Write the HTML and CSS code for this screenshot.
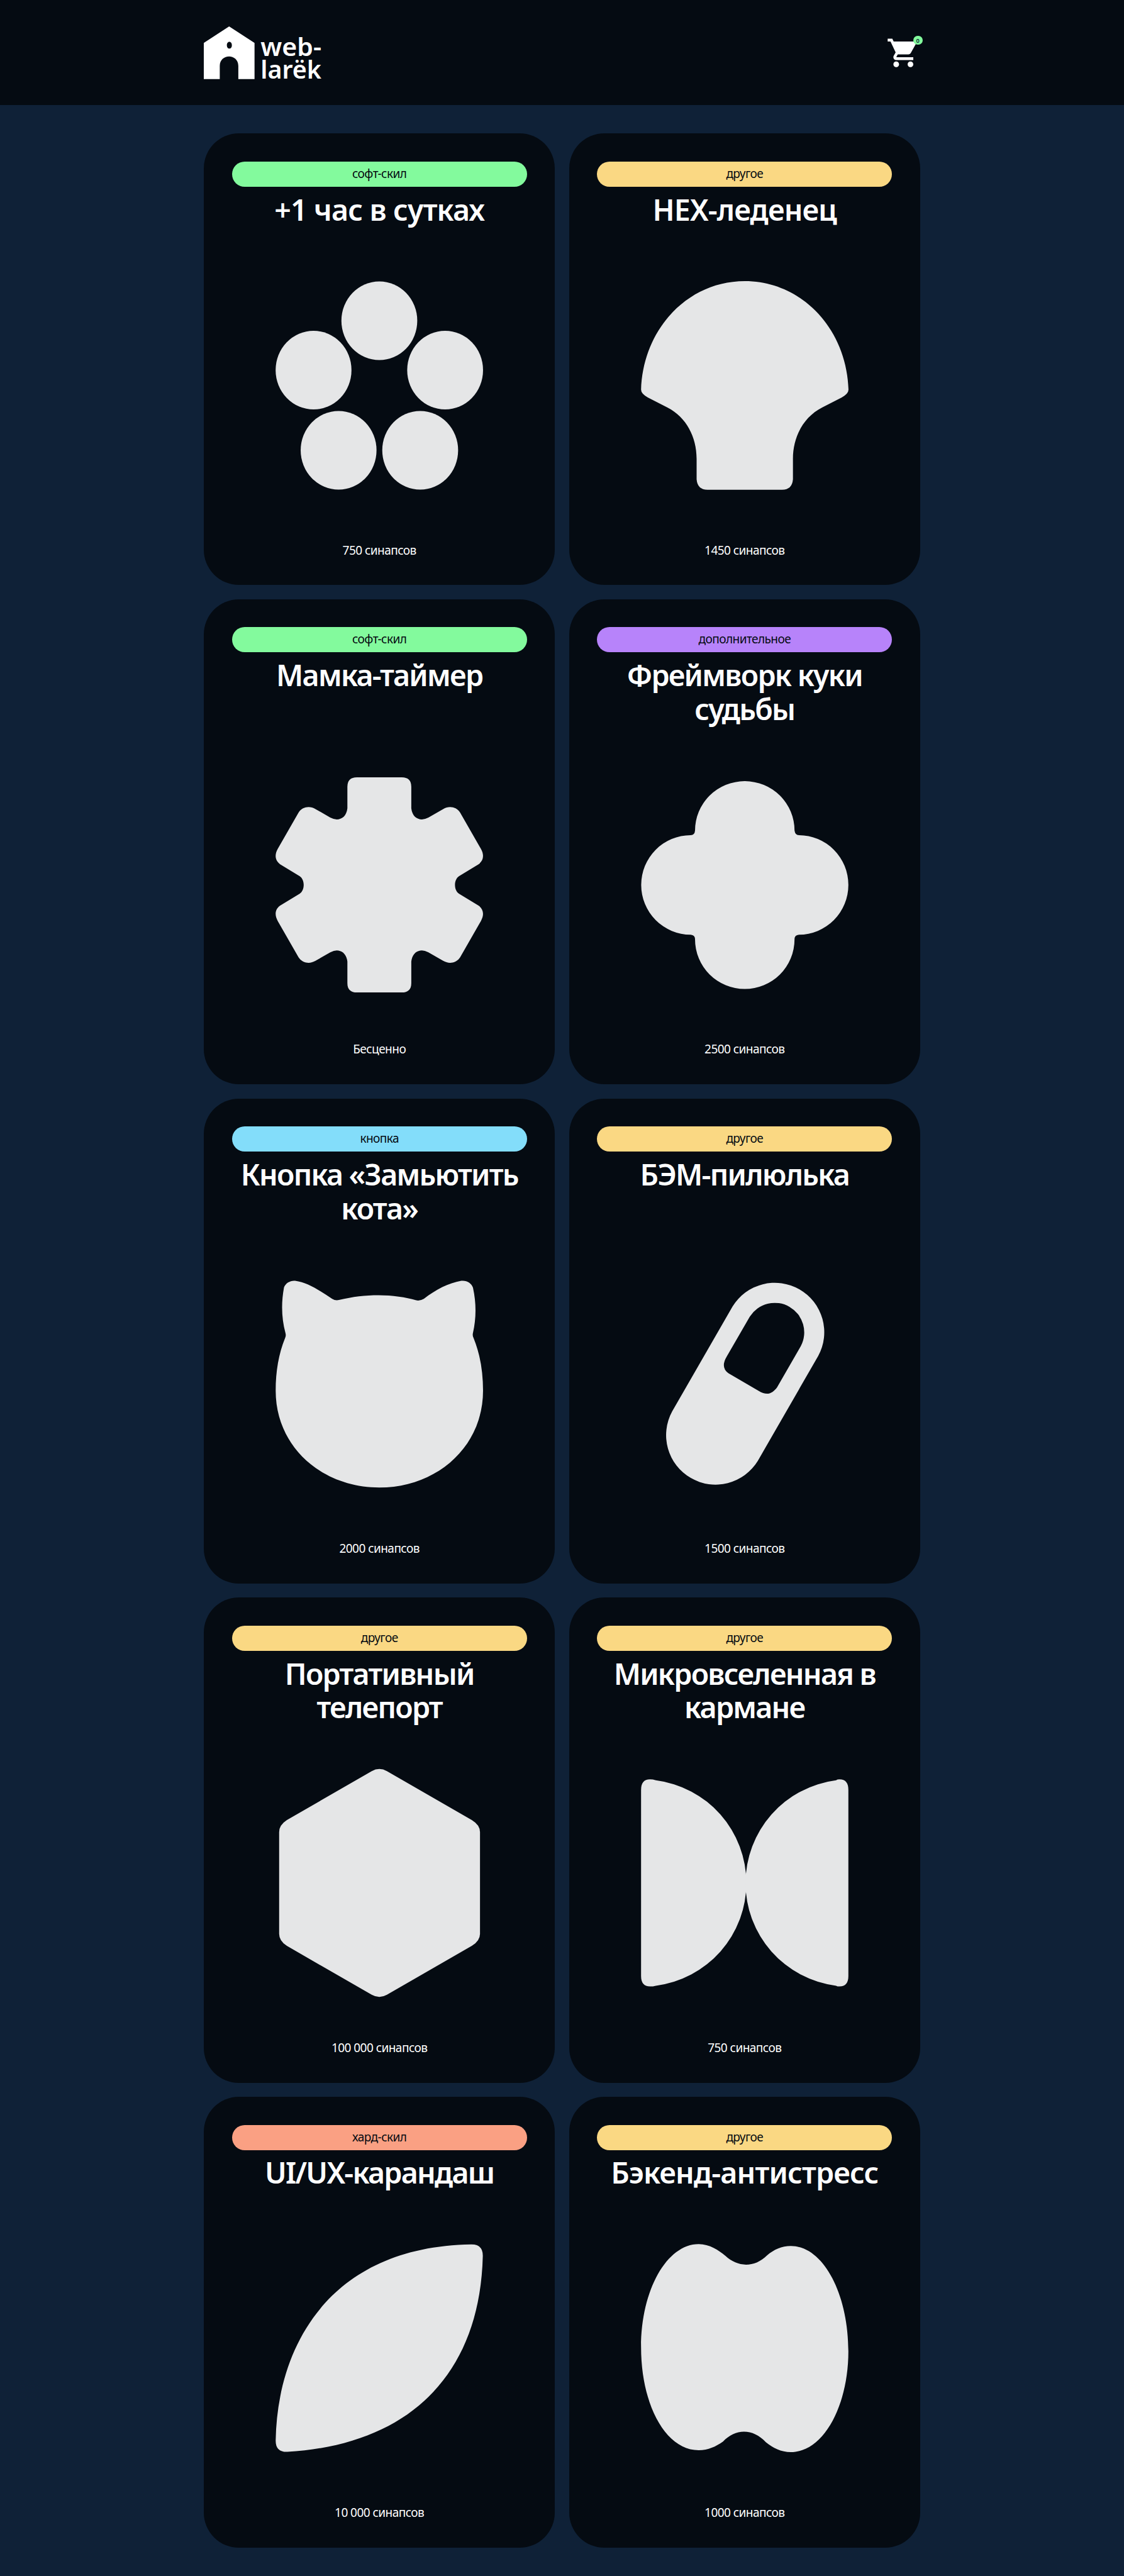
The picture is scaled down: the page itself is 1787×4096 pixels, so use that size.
FILE: index.html
```html
<!DOCTYPE html>
<html lang="ru">
<head>
<meta charset="UTF-8">
<title>web-larëk</title>
<link rel="stylesheet" href="styles.css">
</head>
<body>
<header class="header">
  <div class="header__container">
    <a class="header__logo" aria-label="web-larëk">
      <svg class="logo" viewBox="0 0 204 90">
        <path fill-rule="evenodd" d="M43.3 0L86.7 28.3V90H59V67.5C59 45.8 27.3 45.8 27.3 67.5V90H0V28.3ZM43.7 26.3C41 26.3 39.4 28.8 39.4 32.3S41 38 43.7 38S48 35.8 48 32.3S46.4 26.3 43.7 26.3Z"/>
        <text x="97" y="51" textLength="104" lengthAdjust="spacingAndGlyphs">web-</text>
        <text x="97" y="89.5" textLength="104" lengthAdjust="spacingAndGlyphs">larëk</text>
      </svg>
    </a>
    <button class="header__basket" type="button">
      <svg class="header__basket-icon" viewBox="0 0 24 24"><path d="M7 18c-1.1 0-1.99.9-1.99 2S5.9 22 7 22s2-.9 2-2-.9-2-2-2zM1 2v2h2l3.6 7.59-1.35 2.45c-.16.28-.25.61-.25.96 0 1.1.9 2 2 2h12v-2H7.42c-.14 0-.25-.11-.25-.25l.03-.12.9-1.63h7.45c.75 0 1.41-.41 1.75-1.03l3.58-6.49c.08-.14.12-.31.12-.48 0-.55-.45-1-1-1H5.21l-.94-2H1zm16 16c-1.1 0-1.99.9-1.99 2s.89 2 1.99 2 2-.9 2-2-.9-2-2-2z"/></svg>
      <span class="header__basket-counter">0</span>
    </button>
  </div>
</header>
<main class="gallery">
  <button class="card">
    <span class="card__category card__category_soft">софт-скил</span>
    <h2 class="card__title card__title_wide"><span class="card__line">+1 час в сутках</span></h2>
    <svg class="card__image" viewBox="0 0 400 400"><ellipse cx="200" cy="89.2" rx="64.8" ry="67.2"/><ellipse cx="87.6" cy="173.6" rx="64.8" ry="67.2"/><ellipse cx="312.4" cy="173.6" rx="64.8" ry="67.2"/><ellipse cx="130.4" cy="310.6" rx="64.8" ry="67.2"/><ellipse cx="269.8" cy="310.6" rx="64.8" ry="67.2"/></svg>
    <span class="card__price">750 синапсов</span>
  </button>
  <button class="card">
    <span class="card__category card__category_other">другое</span>
    <h2 class="card__title card__title_wide"><span class="card__line">HEX-леденец</span></h2>
    <svg class="card__image" viewBox="0 0 400 400"><path d="M22.8 207C26 104 102 21.5 200 21.5S374 104 377.2 207Q377.2 214 365.7 220.4L332.1 237.6C300 254 282.3 288 282.3 325V360Q281 378 263.7 378H136.3Q119 378 117.7 360V325C117.7 288 100 254 67.9 237.6L34.3 220.4Q22.8 214 22.8 207Z"/></svg>
    <span class="card__price">1450 синапсов</span>
  </button>
  <button class="card">
    <span class="card__category card__category_soft">софт-скил</span>
    <h2 class="card__title"><span class="card__line">Мамка-таймер</span></h2>
    <svg class="card__image" viewBox="0 0 400 400"><path d="M161.7 16.2H238.3Q254.6 16.2 254.6 32.3V69C256 82 264 88 272.7 88Q277.5 88 283.8 84.8L309.1 70.3C319 64.5 331 66 338 76.2L373.6 138.4C379.5 149 378 158.5 369.6 164.6L336 185C327 191 327 209 336 215L369.6 235.4C378 241.5 379.5 251 373.6 261.6L338 323.8C331 334 319 335.5 309.1 329.7L283.8 315.2Q277.5 312 272.7 312C264 312 256 318 254.6 331V367.7Q254.6 383.8 238.3 383.8H161.7Q145.4 383.8 145.4 367.7V331C144 318 136 312 127.3 312Q122.5 312 116.2 315.2L90.9 329.7C81 335.5 69 334 62 323.8L26.4 261.6C20.5 251 22 241.5 30.4 235.4L64 215C73 209 73 191 64 185L30.4 164.6C22 158.5 20.5 149 26.4 138.4L62 76.2C69 66 81 64.5 90.9 70.3L116.2 84.8Q122.5 88 127.3 88C136 88 144 82 145.4 69V32.3Q145.4 16.2 161.7 16.2Z"/></svg>
    <span class="card__price">Бесценно</span>
  </button>
  <button class="card">
    <span class="card__category card__category_additional">дополнительное</span>
    <h2 class="card__title"><span class="card__line">Фреймворк куки</span> <span class="card__line">судьбы</span></h2>
    <svg class="card__image" viewBox="0 0 400 400"><path d="M115 107A85 84.3 0 0 1 285 107Q286 115 292.5 115A84.5 85 0 0 1 292.5 285Q285 285.5 285 293A85 84.8 0 0 1 115 293Q115 285.5 107.5 285A84.5 85 0 0 1 107.5 115Q114.5 115 115 107Z"/></svg>
    <span class="card__price">2500 синапсов</span>
  </button>
  <button class="card">
    <span class="card__category card__category_button">кнопка</span>
    <h2 class="card__title"><span class="card__line">Кнопка «Замьютить</span> <span class="card__line">кота»</span></h2>
    <svg class="card__image" viewBox="0 0 400 400"><path d="M37.1 34.5C40 27 48 22.5 56 23.2C78 26 98 40 119.4 54Q125 57.5 131 56C155 50 175 47.7 199 47.7C222 47.7 245 51 263 56.5Q269 58 276 54C297 38 318 27 340 23.2C349 22 357.5 27 360 35C366 62 365.5 88 360 112Q358.8 117 361 121C372 148 377.2 178 377.2 211C377.2 307 298 376.5 200 376.5C102 376.5 22.9 307 22.9 211C22.9 178 28 148 39 121Q41 117 39.5 112C33 88 32 62 37.1 34.5Z"/></svg>
    <span class="card__price">2000 синапсов</span>
  </button>
  <button class="card">
    <span class="card__category card__category_other">другое</span>
    <h2 class="card__title"><span class="card__line">БЭМ-пилюлька</span></h2>
    <svg class="card__image" viewBox="0 0 400 400"><path fill-rule="evenodd" d="M179.2 67A84.5 84.5 0 0 1 325.5 151.5L222.2 331A84.5 84.5 0 0 1 75.9 246.5ZM208.6 84.3L169.3 152.3Q158 171 172 181L224 211.5C238 220 247 216 255 205.5L295.8 134.7A50.4 50.4 0 0 0 208.6 84.3Z"/></svg>
    <span class="card__price">1500 синапсов</span>
  </button>
  <button class="card">
    <span class="card__category card__category_other">другое</span>
    <h2 class="card__title"><span class="card__line">Портативный</span> <span class="card__line">телепорт</span></h2>
    <svg class="card__image" viewBox="0 0 400 400"><path d="M187 8.8Q200 1.5 213 8.8L358 92.5Q372 101 372 113V287Q372 299 358 307.5L213 391Q200 398.5 187 391L42 307.5Q28.8 299 28.8 287V113Q28.8 101 42 92.5Z"/></svg>
    <span class="card__price">100 000 синапсов</span>
  </button>
  <button class="card">
    <span class="card__category card__category_other">другое</span>
    <h2 class="card__title"><span class="card__line">Микровселенная в</span> <span class="card__line">кармане</span></h2>
    <svg class="card__image" viewBox="0 0 400 400"><path d="M22.8 41Q22.8 22.9 38 22.9Q43 22.9 48 24.5A176.9 176.9 0 0 1 48 375.5Q43 376.8 38 376.8Q22.8 376.8 22.8 359Z"/><path d="M377 41Q377 22.9 362 22.9Q358 22.9 356 24.5A176.9 176.9 0 0 0 356 375.5Q358 376.8 362 376.8Q377 376.8 377 359Z"/></svg>
    <span class="card__price">750 синапсов</span>
  </button>
  <button class="card">
    <span class="card__category card__category_hard">хард-скил</span>
    <h2 class="card__title"><span class="card__line">UI/UX-карандаш</span></h2>
    <svg class="card__image" viewBox="0 0 400 400"><path d="M22.9 357C26 190 120 26 357 22.3Q377 22 376.8 42C372 240 256 364 43 376.8Q22.5 377.5 22.9 357Z"/></svg>
    <span class="card__price">10 000 синапсов</span>
  </button>
  <button class="card">
    <span class="card__category card__category_other">другое</span>
    <h2 class="card__title card__title_wide"><span class="card__line">Бэкенд-антистресс</span></h2>
    <svg class="card__image" viewBox="0 0 400 400"><path d="M121.3 21.8C140 21.8 155 32 167 42C188 61.5 216 62.5 238 41C250 31 263 25 278.7 25C333 25 377 105 377 205C377 297 335 377.3 278.7 377.3C262 377.3 248 370 236 360.3C214 336.5 184 336.5 162.8 359.3C150 368 138 374 121.3 374C64 374 22.8 295 22.8 198C22.8 100 67 21.8 121.3 21.8Z"/></svg>
    <span class="card__price">1000 синапсов</span>
  </button>
</main>
</body>
</html>
```
FILE: styles.css
```css
/* 1rem = 10 design pixels */
html {
  font-size: 9.305px;
}

body {
  margin: 0;
  background: #0f2137;
  color: #fff;
  font-family: "Noto Sans", "Open Sans", sans-serif;
}

button {
  margin: 0;
  border: 0;
  font: inherit;
  color: inherit;
}

.header {
  height: 18rem;
  background: #050b12;
}

.header__container {
  box-sizing: border-box;
  width: 122.4rem;
  height: 100%;
  margin: 0 auto;
  display: flex;
  justify-content: space-between;
  align-items: center;
}

.logo {
  display: block;
  overflow: visible;
  width: 20.4rem;
  height: 9rem;
  fill: #fff;
  font-size: 43.5px;
  font-weight: 600;
}

.header__basket {
  position: relative;
  width: 5.84rem;
  height: 5.84rem;
  padding: 0;
  background: none;
}

.header__basket-icon {
  display: block;
  width: 100%;
  height: 100%;
  fill: #fff;
}

.header__basket-counter {
  position: absolute;
  top: 0;
  right: -0.4rem;
  width: 1.6rem;
  height: 1.6rem;
  border-radius: 50%;
  background: #83fa9d;
  color: #0f2137;
  font-size: 1rem;
  font-weight: 600;
  line-height: 1.7rem;
  text-align: center;
}

.gallery {
  width: 122.4rem;
  margin: 0 auto;
  padding: 4.8rem 0;
  display: grid;
  grid-template-columns: 1fr 1fr;
  grid-template-rows: 77.2rem repeat(3, 82.9rem) 77.1rem;
  gap: 2.4rem;
}

.card {
  box-sizing: border-box;
  min-width: 0;
  padding: 4.8rem;
  display: flex;
  flex-direction: column;
  align-items: center;
  border-radius: 6rem;
  background: #050b12;
}

.card__category {
  align-self: stretch;
  flex: none;
  height: 4.3rem;
  border-radius: 2.15rem;
  color: #050b12;
  font-size: 2.05rem;
  letter-spacing: -0.03em;
  line-height: 4.2rem;
  text-align: center;
}

.card__category_soft { background: #83fa9d; }
.card__category_hard { background: #faa083; }
.card__category_other { background: #fad883; }
.card__category_additional { background: #b783fa; }
.card__category_button { background: #83ddfa; }

.card__title {
  flex: 1;
  margin: 1.05rem 0 0;
  font-size: 5rem;
  font-weight: 600;
  letter-spacing: -0.037em;
  line-height: 5.76rem;
}

.card__title_wide {
  letter-spacing: -0.018em;
}

.card__line {
  display: block;
  white-space: nowrap;
}

.card__image {
  flex: none;
  width: 40rem;
  height: 40rem;
  margin-bottom: 6.9rem;
  fill: #e5e6e7;
}

.card__price {
  flex: none;
  height: 2.4rem;
  font-size: 2.05rem;
  letter-spacing: -0.03em;
  line-height: 2.4rem;
}
```
